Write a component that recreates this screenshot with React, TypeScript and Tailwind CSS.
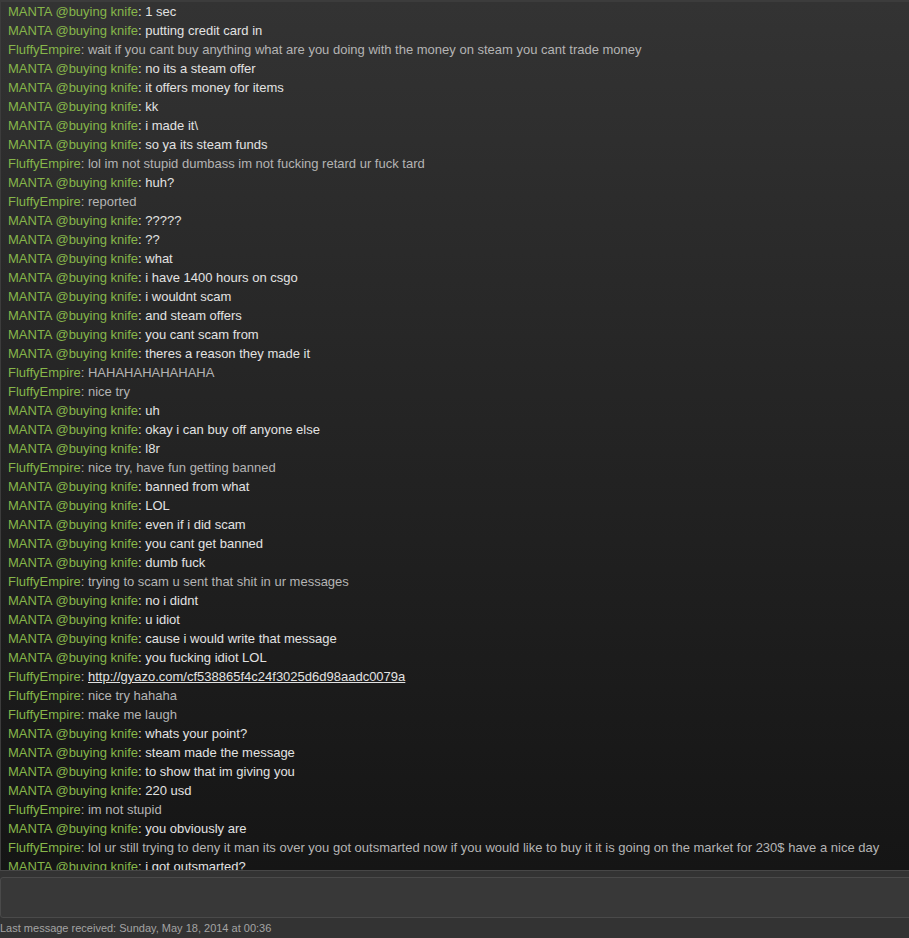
const ME = 'MANTA @buying knife';
const THEM = 'FluffyEmpire';

type Line = { me: boolean; text: string; link?: boolean };

const m = (text: string): Line => ({ me: true, text });
const f = (text: string, link = false): Line => ({ me: false, text, link });

const LINES: Line[] = [
  m('1 sec'),
  m('putting credit card in'),
  f('wait if you cant buy anything what are you doing with the money on steam you cant trade money'),
  m('no its a steam offer'),
  m('it offers money for items'),
  m('kk'),
  m('i made it\\'),
  m('so ya its steam funds'),
  f('lol im not stupid dumbass im not fucking retard ur fuck tard'),
  m('huh?'),
  f('reported'),
  m('?????'),
  m('??'),
  m('what'),
  m('i have 1400 hours on csgo'),
  m('i wouldnt scam'),
  m('and steam offers'),
  m('you cant scam from'),
  m('theres a reason they made it'),
  f('HAHAHAHAHAHAHA'),
  f('nice try'),
  m('uh'),
  m('okay i can buy off anyone else'),
  m('l8r'),
  f('nice try, have fun getting banned'),
  m('banned from what'),
  m('LOL'),
  m('even if i did scam'),
  m('you cant get banned'),
  m('dumb fuck'),
  f('trying to scam u sent that shit in ur messages'),
  m('no i didnt'),
  m('u idiot'),
  m('cause i would write that message'),
  m('you fucking idiot LOL'),
  f('http://gyazo.com/cf538865f4c24f3025d6d98aadc0079a', true),
  f('nice try hahaha'),
  f('make me laugh'),
  m('whats your point?'),
  m('steam made the message'),
  m('to show that im giving you'),
  m('220 usd'),
  f('im not stupid'),
  m('you obviously are'),
  f('lol ur still trying to deny it man its over you got outsmarted now if you would like to buy it it is going on the market for 230$ have a nice day'),
  m('i got outsmarted?'),
];

export default function App() {
  return (
    <div
      className="w-[909px] h-[938px] flex flex-col bg-[#323232] overflow-hidden text-[13px]"
      style={{ fontFamily: '"Liberation Sans", Arial, sans-serif' }}
    >
      {/* chat history */}
      <div className="h-[870px] shrink-0 overflow-hidden border-t-2 border-l border-[#3c3c3c] bg-gradient-to-b from-[#333333] to-[#151515] pl-[7px] pt-0">
        {LINES.map((l, i) => (
          <div key={i} className="h-[19px] leading-[19px] whitespace-nowrap">
            <span className="text-[#86b64a]">{l.me ? ME : THEM}</span>
            <span className={l.me ? 'text-[#e2e2e2]' : 'text-[#b4b4b4]'}>
              :{' '}
              {l.link ? (
                <span className="underline text-[#e2e2e2]">{l.text}</span>
              ) : (
                l.text
              )}
            </span>
          </div>
        ))}
      </div>

      {/* entry box */}
      <div className="h-[48px] shrink-0 border-t border-[#474747] bg-[#333333] pt-[6px]">
        <div className="h-[41px] ml-0 -mr-2 rounded-l-[3px] border border-[#4a4a4a] bg-[#383838]" />
      </div>

      {/* footer */}
      <div className="flex-1 bg-[#333333] text-[11px] leading-[20px] text-[#a4a4a4]">
        Last message received: Sunday, May 18, 2014 at 00:36
      </div>
    </div>
  );
}
